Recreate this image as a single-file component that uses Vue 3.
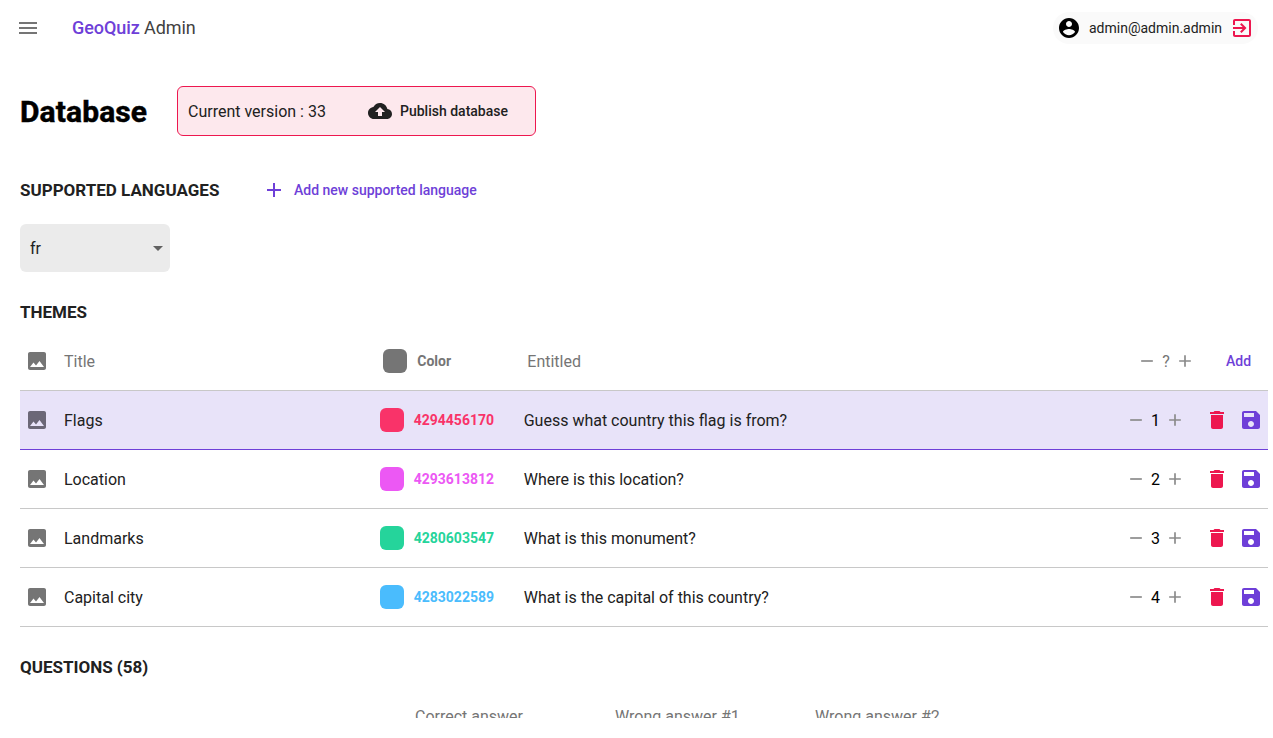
<script setup>
const icons = {
  menu: 'M3 18h18v-2H3v2zm0-5h18v-2H3v2zm0-7v2h18V6H3z',
  account: 'M12 2C6.48 2 2 6.48 2 12s4.48 10 10 10 10-4.48 10-10S17.52 2 12 2zm0 3c1.66 0 3 1.34 3 3s-1.34 3-3 3-3-1.34-3-3 1.34-3 3-3zm0 14.2c-2.5 0-4.71-1.28-6-3.22.03-1.99 4-3.08 6-3.08 1.99 0 5.97 1.09 6 3.08-1.29 1.94-3.5 3.22-6 3.22z',
  exit: 'M10.09 15.59L11.5 17l5-5-5-5-1.41 1.41L12.67 11H3v2h9.67l-2.58 2.59zM19 3H5c-1.11 0-2 .9-2 2v4h2V5h14v14H5v-4H3v4c0 1.1.89 2 2 2h14c1.1 0 2-.9 2-2V5c0-1.1-.9-2-2-2z',
  upload: 'M19.35 10.04C18.67 6.59 15.64 4 12 4 9.11 4 6.6 5.64 5.35 8.04 2.34 8.36 0 10.91 0 14c0 3.31 2.69 6 6 6h13c2.76 0 5-2.24 5-5 0-2.64-2.05-4.78-4.65-4.96zM14 13v4h-4v-4H7l5-5 5 5h-3z',
  add: 'M19 13h-6v6h-2v-6H5v-2h6V5h2v6h6v2z',
  remove: 'M19 13H5v-2h14v2z',
  image: 'M21 19V5c0-1.1-.9-2-2-2H5c-1.1 0-2 .9-2 2v14c0 1.1.9 2 2 2h14c1.1 0 2-.9 2-2zM8.5 13.5l2.5 3.01L14.5 12l4.5 6H5l3.5-4.5z',
  trash: 'M6 19c0 1.1.9 2 2 2h8c1.1 0 2-.9 2-2V7H6v12zM19 4h-3.5l-1-1h-5l-1 1H5v2h14V4z',
  save: 'M17 3H5c-1.11 0-2 .9-2 2v14c0 1.1.89 2 2 2h14c1.1 0 2-.9 2-2V7l-4-4zm-5 16c-1.66 0-3-1.34-3-3s1.34-3 3-3 3 1.34 3 3-1.34 3-3 3zm3-10H5V5h10v4z',
}
const themes = [
  { title: 'Flags', color: 4294456170, tone: 'red', entitled: 'Guess what country this flag is from?', order: 1, selected: true },
  { title: 'Location', color: 4293613812, tone: 'pink', entitled: 'Where is this location?', order: 2 },
  { title: 'Landmarks', color: 4280603547, tone: 'green', entitled: 'What is this monument?', order: 3 },
  { title: 'Capital city', color: 4283022589, tone: 'blue', entitled: 'What is the capital of this country?', order: 4 },
]
const answers = ['Correct answer', 'Wrong answer #1', 'Wrong answer #2']
</script>

<template>
  <div class="page">
    <header class="topbar">
      <svg class="icon muted" viewBox="0 0 24 24"><path :d="icons.menu" /></svg>
      <div class="brand"><b>GeoQuiz</b> Admin</div>
      <div class="user">
        <svg class="icon black" viewBox="0 0 24 24"><path :d="icons.account" /></svg>
        <span>admin@admin.admin</span>
        <svg class="icon danger" viewBox="0 0 24 24"><path :d="icons.exit" /></svg>
      </div>
    </header>

    <main class="content">
      <section class="heading">
        <h1>Database</h1>
        <div class="version">
          <span class="version-label">Current version : 33</span>
          <button class="publish">
            <svg class="icon" viewBox="0 0 24 24"><path :d="icons.upload" /></svg>
            <span>Publish database</span>
          </button>
        </div>
      </section>

      <section class="languages">
        <h2>SUPPORTED LANGUAGES</h2>
        <button class="add-language">
          <svg class="icon" viewBox="0 0 24 24"><path :d="icons.add" /></svg>
          <span>Add new supported language</span>
        </button>
      </section>
      <div class="select"><span>fr</span><i class="caret"></i></div>

      <h2 class="themes-title">THEMES</h2>
      <div class="row head">
        <svg class="icon muted" viewBox="0 0 24 24"><path :d="icons.image" /></svg>
        <span class="title">Title</span>
        <i class="swatch"></i>
        <span class="color">Color</span>
        <span class="entitled">Entitled</span>
        <svg class="icon small" viewBox="0 0 24 24"><path :d="icons.remove" /></svg>
        <span class="order">?</span>
        <svg class="icon small" viewBox="0 0 24 24"><path :d="icons.add" /></svg>
        <button class="add">Add</button>
      </div>
      <div v-for="t in themes" :key="t.color" class="row" :class="[t.tone, { selected: t.selected }]">
        <svg class="icon muted" viewBox="0 0 24 24"><path :d="icons.image" /></svg>
        <span class="title">{{ t.title }}</span>
        <i class="swatch"></i>
        <span class="color">{{ t.color }}</span>
        <span class="entitled">{{ t.entitled }}</span>
        <svg class="icon small" viewBox="0 0 24 24"><path :d="icons.remove" /></svg>
        <span class="order">{{ t.order }}</span>
        <svg class="icon small" viewBox="0 0 24 24"><path :d="icons.add" /></svg>
        <svg class="icon danger trash" viewBox="0 0 24 24"><path :d="icons.trash" /></svg>
        <svg class="icon primary save" viewBox="0 0 24 24"><path :d="icons.save" /></svg>
      </div>

      <h2 class="questions-title">QUESTIONS (58)</h2>
      <div class="answers">
        <span v-for="a in answers" :key="a">{{ a }}</span>
      </div>
    </main>
  </div>
</template>

<style>
body { margin: 0; background: #fff; overflow: hidden; }
</style>

<style scoped>
.page {
  height: 738px;
  width: 1273px;
  overflow: hidden;
  background: #fff;
  color: #212121;
  font: 400 16px/24px Roboto, sans-serif;
}
button {
  border: 0;
  padding: 0;
  background: none;
  color: inherit;
  font: 500 14px/24px Roboto, sans-serif;
  display: flex;
  align-items: center;
}
h1, h2 { margin: 0; }
.icon { width: 24px; height: 24px; flex: none; fill: currentColor; }
.muted { color: #757575; }
.black { color: #000; }
.danger { color: #ed174f; }
.primary { color: #6e3fd8; }

.topbar { height: 56px; display: flex; align-items: center; padding: 0 15px 0 16px; }
.brand { margin-left: 32px; flex: 1; font-size: 18px; letter-spacing: -0.08px; color: #424242; }
.brand b { font-weight: 500; color: #6e3fd8; }
.user {
  box-sizing: border-box;
  display: flex;
  align-items: center;
  height: 32px;
  width: 205px;
  padding: 0 4px;
  border-radius: 16px;
  background: #fafafa;
  font-size: 14px;
}
.user span { flex: 1; margin-left: 8px; white-space: nowrap; }

.content { height: 662px; overflow: hidden; padding-left: 20px; width: 1248px; }
.heading { display: flex; align-items: center; margin-top: 30px; height: 50px; }
h1 {
  width: 157px;
  padding-top: 2px;
  font-size: 30px;
  line-height: 40px;
  font-weight: 700;
  letter-spacing: 0.1px;
  -webkit-text-stroke: 0.5px #000;
  color: #000;
}
.version {
  box-sizing: border-box;
  width: 359px;
  height: 50px;
  padding-left: 10px;
  display: flex;
  align-items: center;
  border: 1px solid #ed174f;
  border-radius: 6px;
  background: #fde8ed;
}
.version-label { width: 180px; padding-top: 2px; }
.publish svg { margin-right: 8px; }

h2 { font-size: 17px; line-height: 24px; font-weight: 700; }
.languages { display: flex; align-items: center; margin-top: 42px; }
.languages h2 { width: 242px; }
.add-language { color: #6e3fd8; }
.add-language svg { margin-right: 8px; }
.select {
  box-sizing: border-box;
  width: 150px;
  height: 48px;
  margin-top: 22px;
  padding: 0 7px 0 10px;
  display: flex;
  align-items: center;
  justify-content: space-between;
  border-radius: 6px;
  background: #ebebeb;
}
.select span { padding-top: 2px; }
.caret { border: 5px solid transparent; border-top-color: #616161; border-bottom: 0; }
.themes-title { margin-top: 28px; }

.row {
  box-sizing: border-box;
  height: 59px;
  display: flex;
  align-items: center;
  padding: 0 5px;
  border-bottom: 1px solid #c8c8c8;
}
.row.head { height: 67px; padding-top: 8px; color: #757575; }
.row.selected { background: #e8e3f9; border-bottom-color: #6e3fd8; }
.selected .muted { color: #6b6777; }
.title { margin-left: 15px; width: 315.7px; padding-top: 2px; }
.swatch { width: 24px; height: 24px; border-radius: 6px; background: currentColor; }
.color { margin-left: 10px; width: 110px; font-size: 14px; font-weight: 700; }
.entitled { flex: 1; padding-top: 2px; }
.small { width: 20px; height: 20px; color: #8a8a8a; }
.order { width: 19px; padding-top: 2px; text-align: center; color: #000; }
.trash { margin-left: 20px; }
.save { margin-left: 10px; }
.head .title { width: 319.3px; }
.head .color { width: 110px; }
.head .order { width: 18px; color: #757575; }
.head .add { width: 68px; padding-left: 31px; box-sizing: border-box; color: #6e3fd8; }
.red .swatch { background: #f93369; }
.red .color { color: #f93369; }
.pink .swatch { background: #ec58f4; }
.pink .color { color: #ec58f4; }
.green .swatch { background: #25d49b; }
.green .color { color: #25d49b; }
.blue .swatch { background: #4abcfd; }
.blue .color { color: #4abcfd; }

.questions-title { margin-top: 28px; }
.answers { display: flex; margin: 26px 0 0 395px; color: #757575; }
.answers span { width: 200px; flex: none; }
</style>
